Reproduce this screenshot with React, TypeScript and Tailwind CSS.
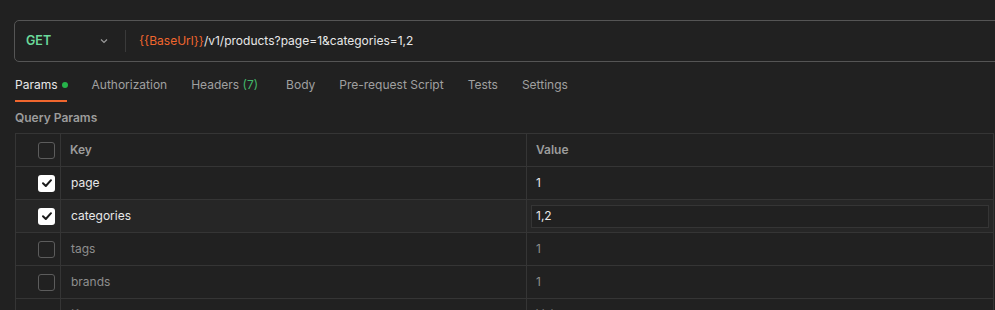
import React from "react";

const Check = ({ checked }: { checked: boolean }) =>
  checked ? (
    <div className="w-[17px] h-[17px] rounded-[3px] bg-white flex items-center justify-center">
      <svg width="12" height="12" viewBox="0 0 12 12">
        <path d="M2 6.3 L4.8 9 L10 3.2" stroke="#1a1a1a" strokeWidth="2" fill="none" strokeLinecap="round" strokeLinejoin="round" />
      </svg>
    </div>
  ) : (
    <div className="w-[17px] h-[17px] rounded-[3px] border border-[#5c5c5c]" />
  );

const rows = [
  { key: "page", value: "1", on: true },
  { key: "categories", value: "1,2", on: true, edit: true },
  { key: "tags", value: "1", on: false },
  { key: "brands", value: "1", on: false },
];

export default function App() {
  return (
    <div className="w-[995px] h-[310px] overflow-hidden bg-[#212121] font-['Inter',sans-serif] text-[12px]">
      <div className="pt-[20px] pl-[14px]">
        <div className="h-[42px] w-[1000px] border border-[#555] rounded-[5px] flex items-center">
          <div className="w-[110px] flex items-center pl-[11px] pr-[16px] justify-between">
            <span className="text-[#6bd99a] font-semibold text-[12.5px]">GET</span>
            <svg width="10" height="10" viewBox="0 0 10 10">
              <path d="M2 3.5 L5 6.5 L8 3.5" stroke="#9a9a9a" strokeWidth="1.2" fill="none" />
            </svg>
          </div>
          <div className="w-px h-[22px] bg-[#3a3a3a]" />
          <div className="pl-[13px] text-[#e8e8e8] text-[12px]">
            <span className="text-[#f0662e]">{"{{BaseUrl}}"}</span>/v1/products?page=1&amp;categories=1,2
          </div>
        </div>
      </div>
      <div className="flex items-end pl-[15px] mt-[14px] h-[26px] gap-[24px] text-[12px]">
        <div className="flex flex-col h-full">
          <div className="flex items-center gap-[4px] text-[#e8e8e8]">
            Params <span className="w-[6px] h-[6px] rounded-full bg-[#26b34a] inline-block" />
          </div>
          <div className="mt-auto h-[2px] w-[52px] bg-[#f0662e]" />
        </div>
        <div className="flex flex-col h-full text-[#a0a0a0]">Authorization</div>
        <div className="flex flex-col h-full text-[#a0a0a0]">
          <div>
            Headers <span className="text-[#43b86a]">(7)</span>
          </div>
        </div>
        <div className="flex flex-col h-full text-[#a0a0a0] pl-[4px]">Body</div>
        <div className="flex flex-col h-full text-[#a0a0a0]">Pre-request Script</div>
        <div className="flex flex-col h-full text-[#a0a0a0]">Tests</div>
        <div className="flex flex-col h-full text-[#a0a0a0]">Settings</div>
      </div>
      <div className="pl-[15px] mt-[8px] text-[12px] font-semibold text-[#9c9c9c] h-[16px] leading-[16px]">Query Params</div>
      <div className="ml-[15px] mt-[7px] w-[979px] border-l border-t border-r border-[#353535]">
        <div className="flex h-[33px] border-b border-[#353535]">
          <div className="w-[45px] flex items-center justify-end pr-[5px] border-r border-[#353535]">
            <Check checked={false} />
          </div>
          <div className="w-[466px] flex items-center pl-[9px] border-r border-[#353535] font-semibold text-[12px] text-[#9c9c9c]">Key</div>
          <div className="flex-1 flex items-center pl-[9px] font-semibold text-[12px] text-[#9c9c9c]">Value</div>
        </div>
        {rows.map((r) => (
          <div key={r.key} className={`flex h-[33px] border-b border-[#353535] ${r.edit ? "bg-[#262626]" : ""}`}>
            <div className="w-[45px] flex items-center justify-end pr-[5px] border-r border-[#353535]">
              <Check checked={r.on} />
            </div>
            <div className={`w-[466px] flex items-center pl-[10px] border-r border-[#353535] ${r.on ? "text-[#e8e8e8]" : "text-[#8e8e8e]"}`}>
              {r.key}
            </div>
            <div className="flex-1 flex items-center px-[4px]">
              {r.edit ? (
                <div className="w-full h-[23px] border border-[#353535] bg-[#212121] flex items-center pl-[4px] text-[#e8e8e8]">{r.value}</div>
              ) : (
                <span className={`pl-[5px] ${r.on ? "text-[#e8e8e8]" : "text-[#8e8e8e]"}`}>{r.value}</span>
              )}
            </div>
          </div>
        ))}
        <div className="flex h-[33px]">
          <div className="w-[45px] border-r border-[#353535]" />
          <div className="w-[466px] flex items-start pt-[6px] pl-[10px] border-r border-[#353535] text-[#6e6e6e]">Key</div>
          <div className="flex-1 flex items-start pt-[6px] pl-[9px] text-[#6e6e6e]">Value</div>
        </div>
      </div>
    </div>
  );
}
